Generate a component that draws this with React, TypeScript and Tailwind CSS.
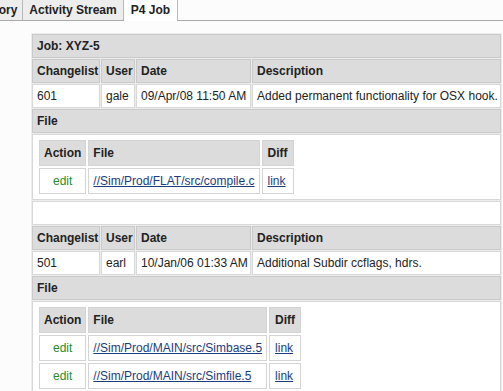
import React from 'react'

type FileRow = { path: string }

type Change = {
  changelist: string
  user: string
  date: string
  description: string
  files: FileRow[]
}

const changes: Change[] = [
  {
    changelist: '601',
    user: 'gale',
    date: '09/Apr/08 11:50 AM',
    description: 'Added permanent functionality for OSX hook.',
    files: [{ path: '//Sim/Prod/FLAT/src/compile.c' }],
  },
  {
    changelist: '501',
    user: 'earl',
    date: '10/Jan/06 01:33 AM',
    description: 'Additional Subdir ccflags, hdrs.',
    files: [
      { path: '//Sim/Prod/MAIN/src/Simbase.5' },
      { path: '//Sim/Prod/MAIN/src/Simfile.5' },
    ],
  },
]

const head = 'h-[24px] border border-[#cacaca] bg-[#dcdcdc] px-[4px] text-left font-bold whitespace-nowrap align-middle'
const data = 'h-[24px] border border-[#d8d8d8] bg-white px-[4px] text-left whitespace-nowrap align-middle'
const subHead = 'h-[26px] border border-[#d4d4d4] bg-[#dcdcdc] px-[4px] text-left font-bold whitespace-nowrap align-middle'
const subData = 'h-[26px] border border-[#d4d4d4] bg-white px-[4px] whitespace-nowrap align-middle'

const Tabs = () => (
  <div className="flex h-[21px] border-b border-[#aaaaaa]">
    <div className="ml-[-29px] h-[20px] border-r border-[#b8b8b8] bg-[#ededed] px-[5px] font-bold leading-[20px]">
      History
    </div>
    <div className="h-[20px] border-r border-[#b8b8b8] bg-[#ededed] px-[6px] font-bold leading-[20px]">
      Activity Stream
    </div>
    <div className="mb-[-1px] h-[21px] border-r border-[#b8b8b8] bg-white px-[7px] font-bold leading-[20px]">
      P4 Job
    </div>
  </div>
)

const FileTable = ({ files }: { files: FileRow[] }) => (
  <table className="border-separate border-spacing-[2px]">
    <thead>
      <tr>
        <th className={subHead}>Action</th>
        <th className={subHead}>File</th>
        <th className={`${subHead} px-[5px]`}>Diff</th>
      </tr>
    </thead>
    <tbody>
      {files.map((f) => (
        <tr key={f.path}>
          <td className={`${subData} text-center text-[#2a8a2a]`}>edit</td>
          <td className={subData}>
            <a href="#" className="text-[#1c3c7c] underline">
              {f.path}
            </a>
          </td>
          <td className={`${subData} px-[5px]`}>
            <a href="#" className="text-[#1c3c7c] underline">
              link
            </a>
          </td>
        </tr>
      ))}
    </tbody>
  </table>
)

export default function App() {
  return (
    <div className="h-[391px] overflow-hidden bg-[#fcfcfc] font-['Liberation_Sans',Arial,sans-serif] text-[12px] leading-[14px] text-[#222]">
      <Tabs />
      <div className="pl-[31px] pt-[12px]">
        <table className="w-[471px] table-fixed border-separate border-spacing-[1px] bg-[#ececec]">
          <colgroup>
            <col className="w-[68px]" />
            <col className="w-[34px]" />
            <col className="w-[115px]" />
            <col />
          </colgroup>
          <tbody>
            <tr>
              <th colSpan={4} className={head}>
                Job: XYZ-5
              </th>
            </tr>
            {changes.map((c, i) => (
              <React.Fragment key={c.changelist}>
                {i > 0 && (
                  <tr>
                    <td colSpan={4} className={`${data} h-[22px]`} />
                  </tr>
                )}
                <tr>
                  <th className={head}>Changelist</th>
                  <th className={head}>User</th>
                  <th className={head}>Date</th>
                  <th className={head}>Description</th>
                </tr>
                <tr>
                  <td className={data}>{c.changelist}</td>
                  <td className={data}>{c.user}</td>
                  <td className={data}>{c.date}</td>
                  <td className={data}>{c.description}</td>
                </tr>
                <tr>
                  <th colSpan={4} className={head}>
                    File
                  </th>
                </tr>
                <tr>
                  <td colSpan={4} className={`${data} px-[3px] pt-[3px] pb-[3px]`}>
                    <FileTable files={c.files} />
                  </td>
                </tr>
              </React.Fragment>
            ))}
          </tbody>
        </table>
      </div>
    </div>
  )
}
